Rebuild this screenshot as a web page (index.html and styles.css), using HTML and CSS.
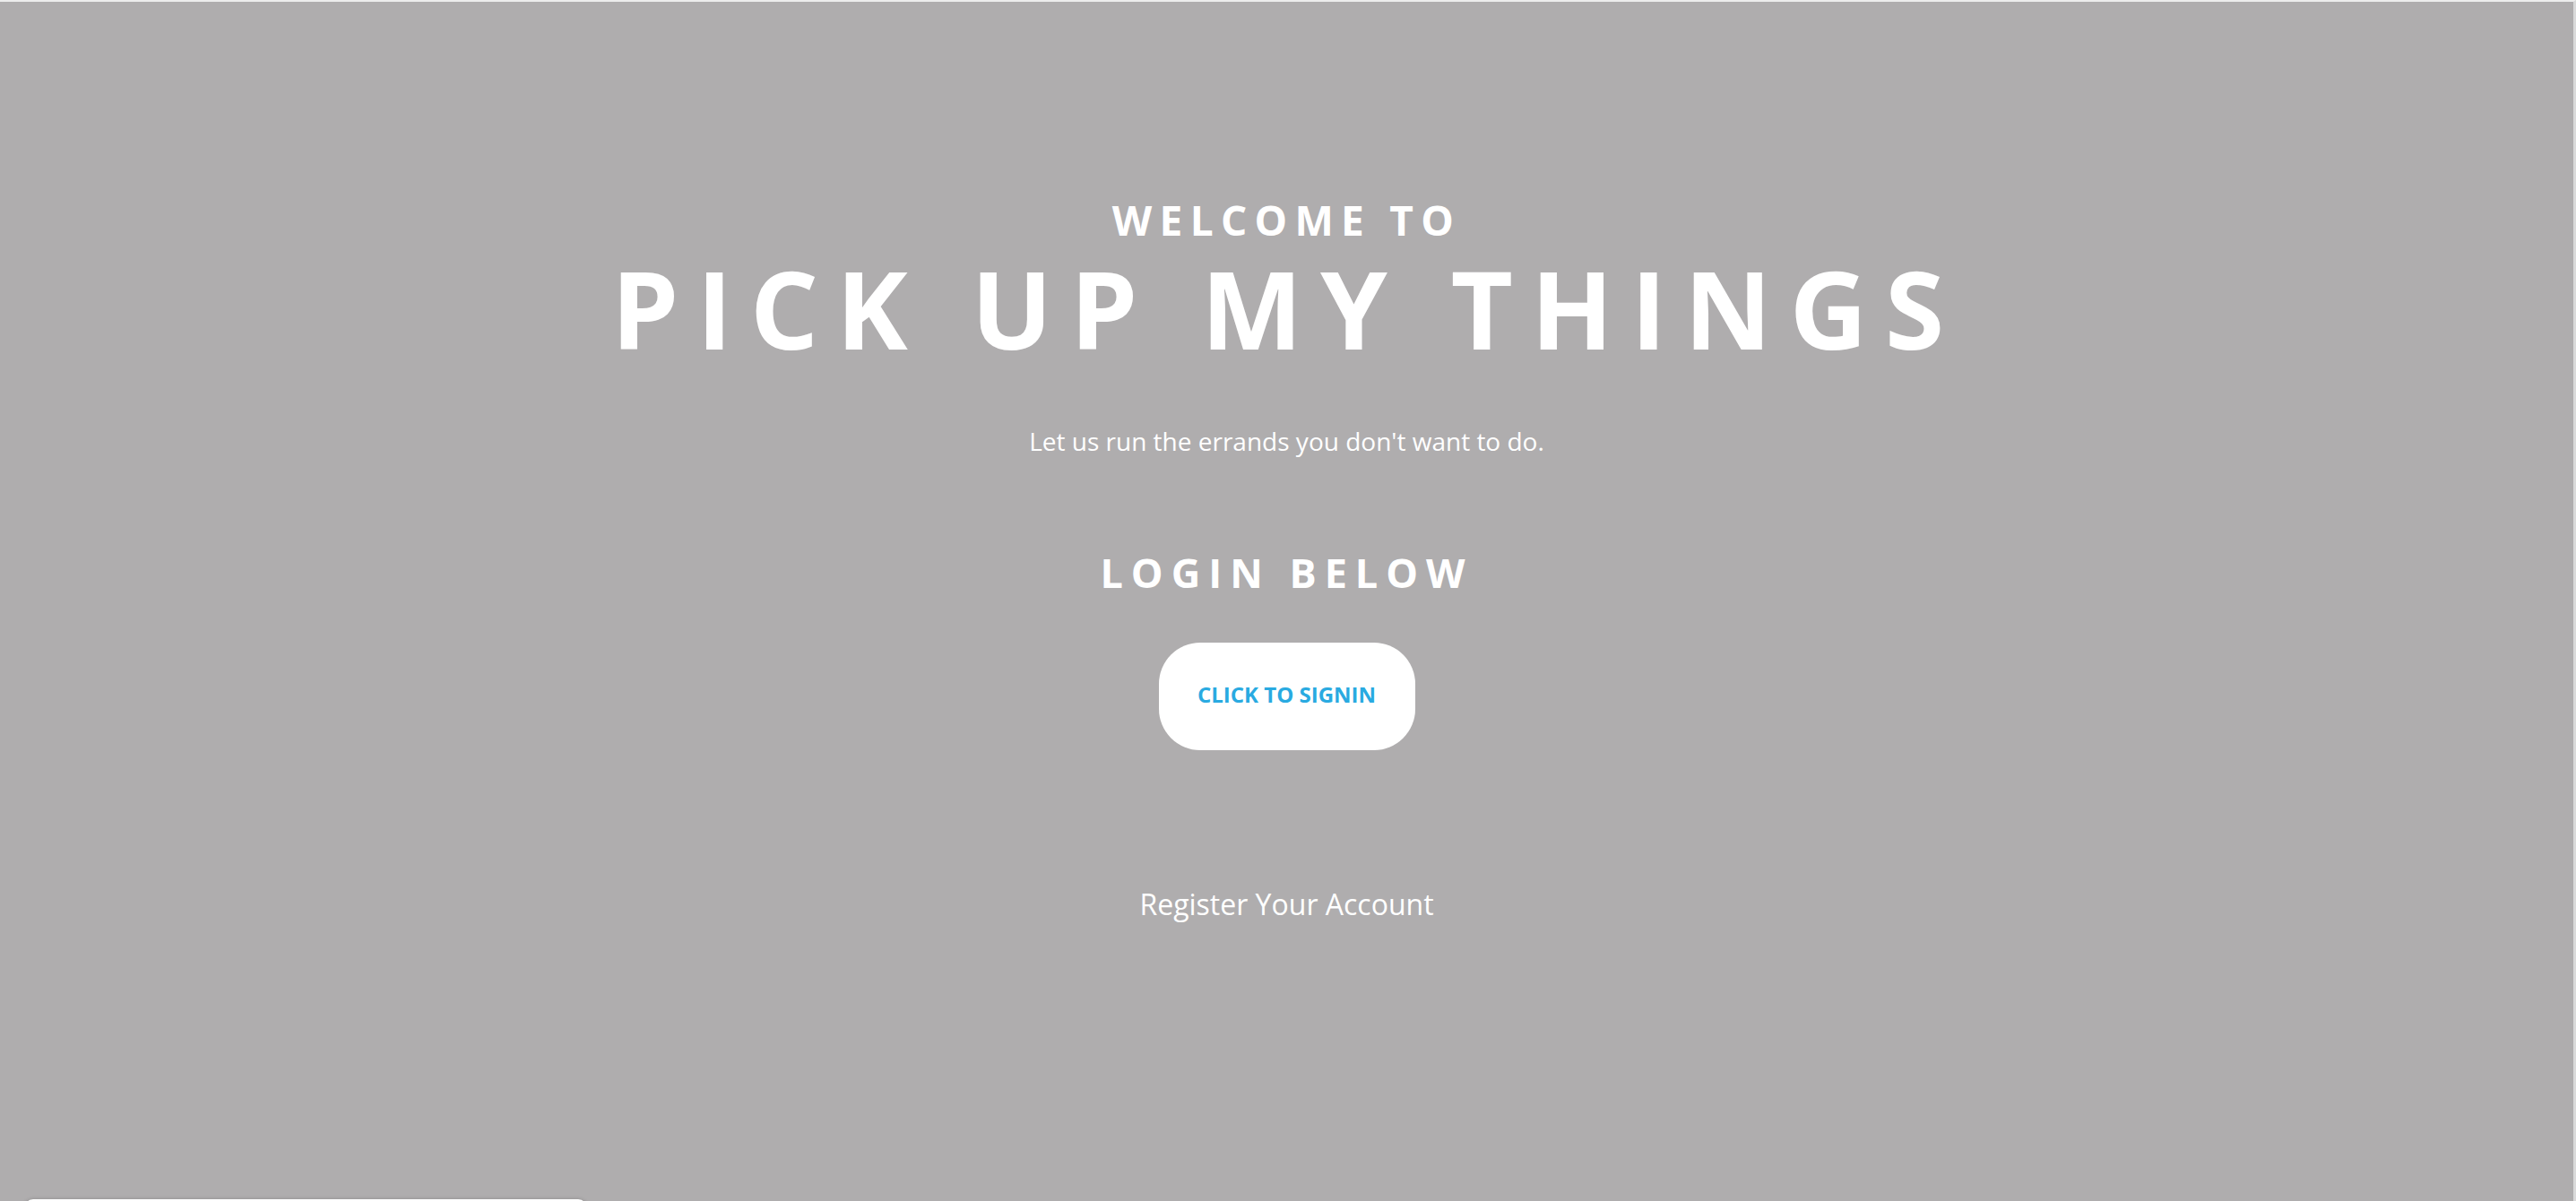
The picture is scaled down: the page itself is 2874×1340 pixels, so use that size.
FILE: index.html
```html
<!DOCTYPE html>
<html lang="en">
<head>
    <meta charset="UTF-8">
    <meta name="viewport" content="width=device-width, initial-scale=1.0">
    <title>Pick Up My Things</title>
    <link rel="stylesheet" href="styles.css">
</head>
<body>
    <main class="hero">
        <p class="eyebrow">WELCOME TO</p>
        <h1 class="title">PICK UP MY THINGS</h1>
        <p class="tagline">Let us run the errands you don't want to do.</p>
        <h2 class="login-heading">LOGIN BELOW</h2>
        <button class="signin-btn">CLICK TO SIGNIN</button>
        <a class="register-link" href="#">Register Your Account</a>
    </main>
    <div class="corner-card"></div>
</body>
</html>
```

FILE: styles.css
```css
html, body {
    height: 100%;
}

body {
    margin: 0;
    font-family: 'Open Sans', 'Liberation Sans', sans-serif;
    background: #afadae;
    color: #fff;
    border-top: 2px solid #ededed;
    border-right: 3px solid #d9d9d9;
    box-sizing: border-box;
    overflow: hidden;
}

.hero {
    display: flex;
    flex-direction: column;
    align-items: center;
    text-align: center;
    padding-top: 220px;
}

.eyebrow {
    margin: 0;
    font-size: 46px;
    line-height: 46px;
    font-weight: 700;
    letter-spacing: 0.18em;
}

.title {
    margin: 16px 0 0;
    font-size: 120px;
    line-height: 120px;
    font-weight: 700;
    letter-spacing: 0.165em;
}

.tagline {
    margin: 70px 0 0;
    font-size: 28px;
    line-height: 36px;
}

.login-heading {
    margin: 106px 0 0;
    font-size: 45px;
    line-height: 45px;
    font-weight: 700;
    letter-spacing: 0.2em;
}

.signin-btn {
    margin-top: 56px;
    width: 286px;
    height: 120px;
    padding: 0 0 6px;
    border: none;
    border-radius: 46px;
    background: #fff;
    color: #29aae1;
    font-family: inherit;
    font-size: 24px;
    font-weight: 700;
    cursor: pointer;
}

.register-link {
    margin-top: 152px;
    font-size: 32px;
    line-height: 40px;
    color: #fff;
    text-decoration: none;
}

.corner-card {
    position: fixed;
    left: 27px;
    bottom: -40px;
    width: 628px;
    height: 42px;
    background: #fff;
    border-radius: 10px;
    box-shadow: 0 0 4px rgba(0, 0, 0, 0.2);
}
```
